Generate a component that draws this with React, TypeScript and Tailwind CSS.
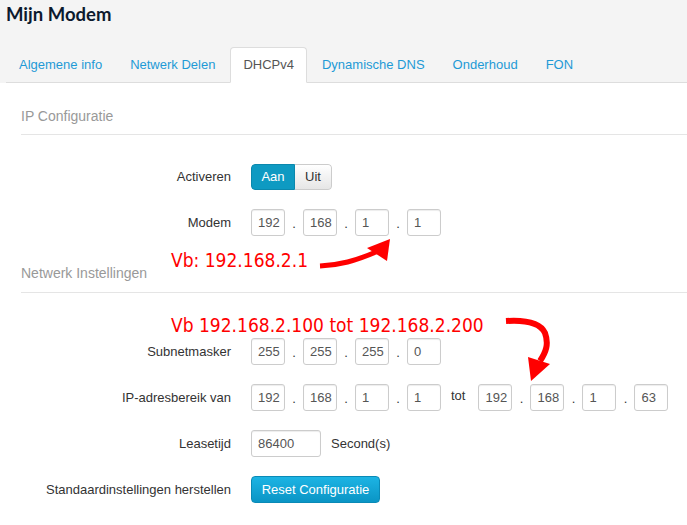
import React from 'react';

const tabs = ['Algemene info', 'Netwerk Delen', 'DHCPv4', 'Dynamische DNS', 'Onderhoud', 'FON'];

function Field({ value, wide }: { value: string; wide?: boolean }) {
  return (
    <div
      className={`${wide ? 'w-[70px]' : 'w-[34px]'} h-[27px] flex items-center border border-[#ccc] rounded-[3px] pl-[6px] text-[13px] text-[#555] bg-white shadow-[inset_0_1px_1px_rgba(0,0,0,0.075)] whitespace-nowrap`}
    >
      {value}
    </div>
  );
}

function Ip({ parts }: { parts: string[] }) {
  return (
    <div className="flex items-center">
      {parts.map((p, i) => (
        <React.Fragment key={i}>
          {i > 0 && <span className="w-[18px] text-center text-[#333] pt-[3px]">.</span>}
          <Field value={p} />
        </React.Fragment>
      ))}
    </div>
  );
}

function Row({ label, className, children }: { label: string; className?: string; children: React.ReactNode }) {
  return (
    <div className={`flex items-center h-[27px] ${className ?? ''}`}>
      <label className="w-[230px] pr-[20px] text-right">{label}</label>
      {children}
    </div>
  );
}

export default function App() {
  return (
    <div className="relative w-[687px] h-[525px] overflow-hidden bg-white font-['Liberation_Sans',Arial,sans-serif] text-[13px] text-[#333]">
      <header className="bg-[#f4f4f4] pt-[2px] pl-[6px]">
        <h1 className="font-['Lato',sans-serif] font-bold text-[18.5px] leading-[25px] text-[#0c1a2e]">Mijn Modem</h1>
        <nav className="mt-[20px] flex border-b border-[#ddd]">
          {tabs.map((t) => {
            const active = t === 'DHCPv4';
            return (
              <div
                key={t}
                className={`-mb-px mr-[2px] h-[36px] px-[12px] flex items-center border rounded-t-[4px] ${
                  active ? 'bg-white border-[#ddd] border-b-transparent text-[#555]' : 'border-transparent text-[#1e9ad6]'
                }`}
              >
                {t}
              </div>
            );
          })}
        </nav>
      </header>

      <main className="pl-[21px]">
        <div className="mt-[23px] pb-[8px] border-b border-[#e5e5e5] text-[14px] leading-[20px] text-[#999]">IP Configuratie</div>

        <Row label="Activeren" className="mt-[28px] h-[26px]">
          <div className="flex h-[26px] rounded-[4px] overflow-hidden">
            <span className="w-[44px] flex items-center justify-center bg-[#0e9ac2] text-white border border-[#0b88ad] rounded-l-[4px]">Aan</span>
            <span className="w-[37px] flex items-center justify-center bg-gradient-to-b from-white to-[#e6e6e6] border border-l-0 border-[#ccc] rounded-r-[4px]">Uit</span>
          </div>
        </Row>

        <Row label="Modem" className="mt-[19px]">
          <Ip parts={['192', '168', '1', '1']} />
        </Row>

        <div className="mt-[27px] pb-[9px] border-b border-[#e5e5e5] text-[14px] leading-[20px] text-[#999]">Netwerk Instellingen</div>

        <Row label="Subnetmasker" className="mt-[45px]">
          <Ip parts={['255', '255', '255', '0']} />
        </Row>

        <Row label="IP-adresbereik van" className="mt-[19px]">
          <Ip parts={['192', '168', '1', '1']} />
          <span className="ml-[10px] mr-[13px] -mt-[4px]">tot</span>
          <Ip parts={['192', '168', '1', '63']} />
        </Row>

        <Row label="Leasetijd" className="mt-[19px]">
          <Field value="86400" wide />
          <span className="ml-[10px]">Second(s)</span>
        </Row>

        <Row label="Standaardinstellingen herstellen" className="mt-[19px]">
          <button className="w-[129px] h-[27px] rounded-[4px] border border-[#0a8ab6] bg-gradient-to-b from-[#1cb4e4] to-[#0a95c5] text-white text-[13px]">
            Reset Configuratie
          </button>
        </Row>
      </main>

      <span className="absolute left-[171px] top-[247px] font-['DejaVu_Sans_Condensed','DejaVu_Sans',sans-serif] [font-stretch:condensed] text-[19px] leading-[26px] text-[#f00]">
        Vb: 192.168.2.1
      </span>
      <span className="absolute left-[171px] top-[312px] font-['DejaVu_Sans_Condensed','DejaVu_Sans',sans-serif] [font-stretch:condensed] text-[19px] leading-[26px] text-[#f00]">
        Vb 192.168.2.100 tot 192.168.2.200
      </span>

      <svg className="absolute inset-0 pointer-events-none" width="687" height="525" viewBox="0 0 687 525">
        <path d="M320 266 C 340 265, 355 261, 376 252" stroke="#f00" strokeWidth="5" fill="none" />
        <polygon points="367,248 390,239 387,261" fill="#f00" />
        <path d="M506 321 C 522 320, 540 322, 545 333 C 549 344, 546 352, 540 361" stroke="#f00" strokeWidth="6" fill="none" />
        <polygon points="528,357 550,364 531,381" fill="#f00" />
      </svg>
    </div>
  );
}
